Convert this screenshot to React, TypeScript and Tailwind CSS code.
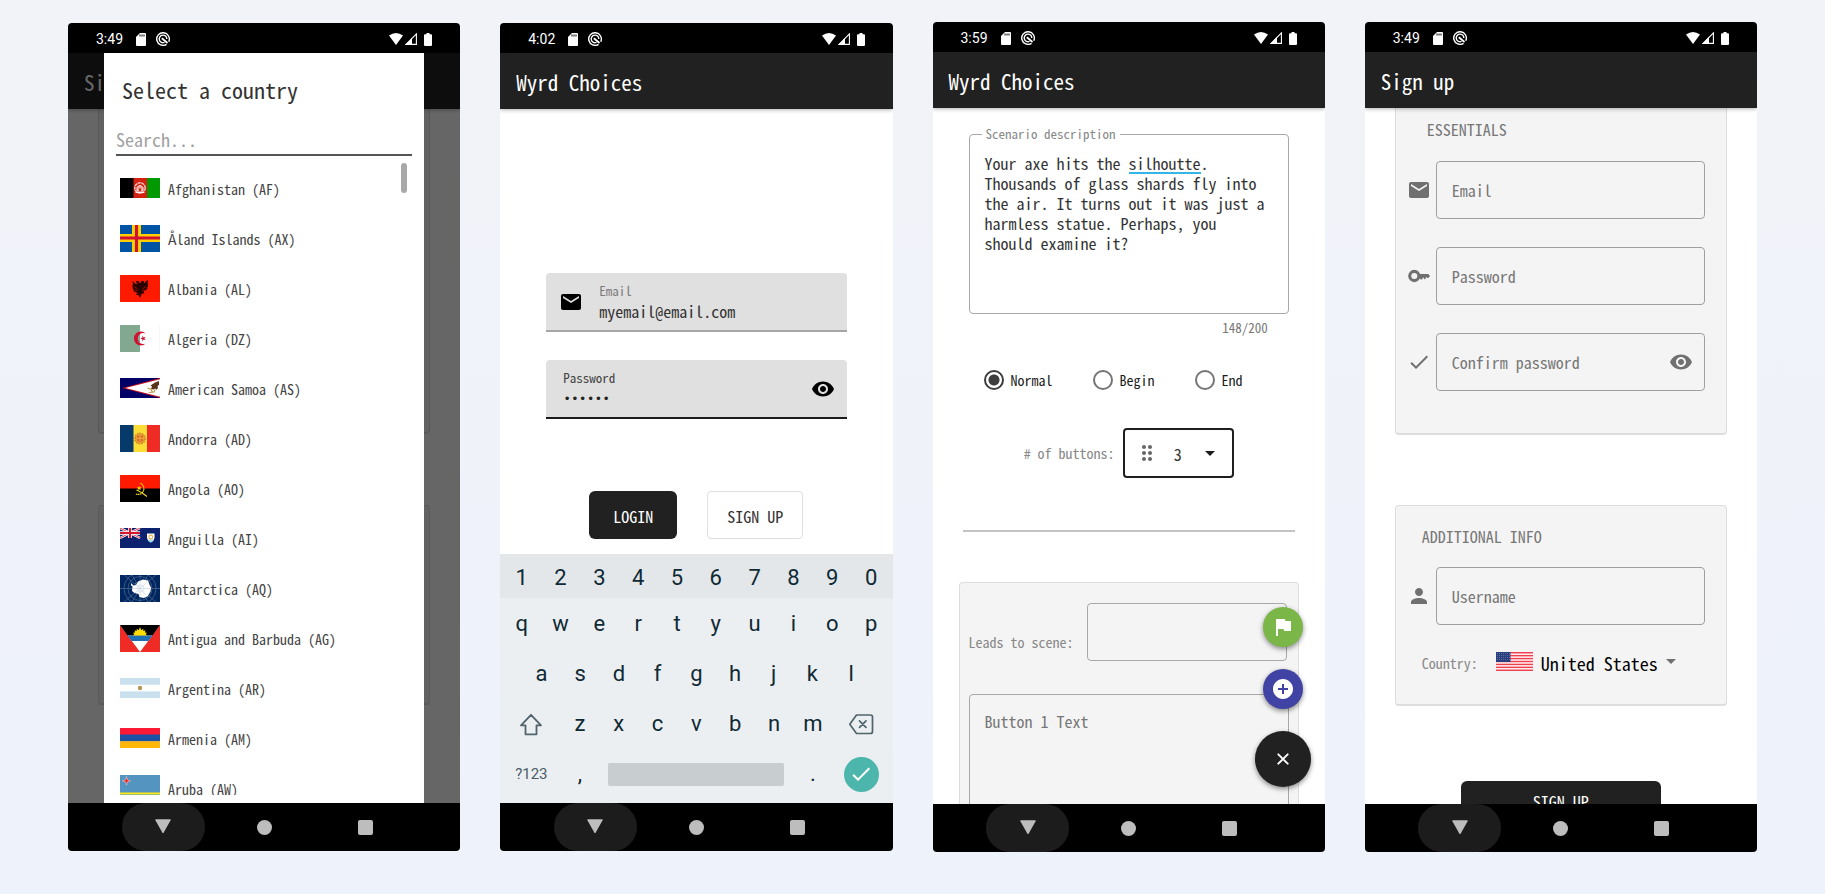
import React from "react";
import { MdEmail, MdVisibility, MdCheck, MdPerson, MdFlag, MdAddCircle, MdDragIndicator, MdArrowDropDown } from "react-icons/md";

type Flag = { h: 20 | 27; art: React.ReactNode };

const stripesV = (a: string, b: string, c: string, h: number) => (
  <>
    <rect width="14" height={h} fill={a} />
    <rect x="13.5" width="13.5" height={h} fill={b} />
    <rect x="27" width="13" height={h} fill={c} />
  </>
);

const flags: Record<string, Flag> = {
  AF: {
    h: 20,
    art: (
      <>
        {stripesV("#000", "#d32011", "#009a00", 20)}
        <circle cx="20" cy="10" r="5.2" fill="none" stroke="#f3c9c4" strokeWidth="1.4" strokeDasharray="3 .6" />
        <path d="M17 13V9.500q3-4 6 0V13zM15.500 14.500h9" fill="#ee9a92" stroke="#fff" strokeWidth=".9" />
        <path d="M19 13v-2.500h2V13" fill="#d32011" />
      </>
    ),
  },
  AX: {
    h: 27,
    art: (
      <>
        <rect width="40" height="27" fill="#0053a5" />
        <path d="M12 0h9v27h-9zM0 9h40v8H0z" fill="#ffce00" />
        <path d="M15 0h3v27h-3zM0 11.500h40v3H0z" fill="#d21034" />
      </>
    ),
  },
  AL: {
    h: 27,
    art: (
      <>
        <rect width="40" height="27" fill="#ff1a00" />
        <path
          d="M20 8.500 18.500 6h-3l1.500 2-.8 1.500-3.700-3.500.5 4-1 .5 1 1.500-.8 1 1.300 1-.6 1.500 1.600.2-.3 1.800 2-.7.8 1.500-1 1.500 2 .2 1 1L20 23l1.500-3.500 1-1 2-.2-1-1.500.8-1.500 2 .7-.3-1.800 1.600-.2-.6-1.500 1.300-1-.8-1 1-1.500-1-.5.5-4-3.700 3.500-.8-1.500L24.500 6h-3z"
          fill="#2a0300"
        />
        <path d="M14.500 11.500l3 2.500M25.500 11.500l-3 2.500M15 15l2.500.5M25 15l-2.500.5M18.500 18.500v1M21.500 18.500v1" stroke="#d01500" strokeWidth=".7" />
      </>
    ),
  },
  DZ: {
    h: 27,
    art: (
      <>
        <rect width="40" height="27" fill="#fff" />
        <rect width="20" height="27" fill="#82a98f" />
        <rect x="39.5" width=".5" height="27" fill="#eee" />
        <path d="M25.700 8.400a7 7 0 1 0 0 10.200 5.600 5.600 0 1 1 0-10.200z" fill="#d21034" />
        <path d="m20.300 13.500 2-.7v-2.200l1.300 1.800 2.100-.7-1.300 1.800 1.300 1.800-2.100-.7-1.300 1.800v-2.200z" fill="#d21034" />
      </>
    ),
  },
  AS: {
    h: 20,
    art: (
      <>
        <rect width="40" height="20" fill="#000066" />
        <path d="M40 0v20L2 10z" fill="#bd1021" />
        <path d="M40 1.200v17.600L5.500 10z" fill="#fff" />
        <path d="M39 3l-4 1.500-4.500 3 1.500 1-1 2.500 2 .5 2.500-1 .5 1.500 2-2-.5-2 1.500-1z" fill="#5a3219" />
        <path d="M27.500 10l4 1.500M29 14.500l5-.5 1-2.500M31 12l2 2.500" stroke="#b99646" strokeWidth="1.2" fill="none" />
      </>
    ),
  },
  AD: {
    h: 27,
    art: (
      <>
        {stripesV("#063a6b", "#fedd36", "#ee2b24", 27)}
        <circle cx="20" cy="13.5" r="5.2" fill="#e9a234" stroke="#d08a26" strokeWidth="1.6" strokeDasharray="1.6 1" />
        <path d="M17 10.500h6v5q-3 3-6 0z" fill="#dd6a2b" />
        <path d="M20 10.500v6M17 13.300h6" stroke="#f5c04a" strokeWidth=".8" />
      </>
    ),
  },
  AO: {
    h: 27,
    art: (
      <>
        <rect width="40" height="27" fill="#000" />
        <rect width="40" height="13.5" fill="#ff1a00" />
        <path d="M20.500 8.300a5.800 5.800 0 1 1-5 10.600" fill="none" stroke="#f5dd1e" strokeWidth="1.2" strokeDasharray="1.6 .4" />
        <path d="M16.500 15q4 1.500 10.500 6.500" fill="none" stroke="#f5dd1e" strokeWidth="1.1" />
        <path d="m19 11 .8 1.300 1.500.1-1 1.100.4 1.500-1.700-.7-1.300.7.3-1.500-1-1 1.500-.2z" fill="#f5dd1e" />
      </>
    ),
  },
  AI: {
    h: 20,
    art: (
      <>
        <rect width="40" height="20" fill="#0c226e" />
        <path d="M0 0l20 10M20 0 0 10" stroke="#fff" strokeWidth="2.4" />
        <path d="M0 0l20 10M20 0 0 10" stroke="#e23b4e" strokeWidth="1" />
        <path d="M10 0v10M0 5h20" stroke="#fff" strokeWidth="3.6" />
        <path d="M10 0v10M0 5h20" stroke="#d8172f" strokeWidth="2" />
        <path d="M27 5.500h7.500V10q-.5 3-3.700 4.500Q27.500 13 27 10z" fill="#fff" />
        <path d="M27.500 11.500h6.500q-1 2-3.200 3-2.300-1-3.300-3z" fill="#9fd9e4" />
        <circle cx="30.8" cy="9" r="1.9" fill="none" stroke="#f0b04a" strokeWidth="1.1" />
      </>
    ),
  },
  AQ: {
    h: 27,
    art: (
      <>
        <rect width="40" height="27" fill="#00265f" />
        <g fill="none" stroke="#5d779d" strokeWidth=".6">
          <path d="M20 0v27M0 13.500h40M4 0l32 27M36 0 4 27M12 0l16 27M28 0 12 27" />
          <circle cx="20" cy="13.5" r="12" />
          <circle cx="20" cy="13.5" r="16" />
        </g>
        <path d="m11 8 2.500 2.500 2.500-.5 2-3.500 5-2 5 1 1.500 4 1.500 3-.5 4-3 5-4 1.500-4-1-1-3-4-1-2.500-2 .5-4.500-1.500-1z" fill="#fff" />
        <path d="M20 6v15M13 13.500h17M15 8l11 12M27 7 15 18" stroke="#b9c6d8" strokeWidth=".5" />
        <circle cx="20.5" cy="13.5" r="3.5" fill="none" stroke="#b9c6d8" strokeWidth=".5" />
      </>
    ),
  },
  AG: {
    h: 27,
    art: (
      <>
        <rect width="40" height="27" fill="#ee2b24" />
        <path d="M0 0h40L20 27z" fill="#fff" />
        <path d="M0 0h40L32.500 10.500h-25z" fill="#000" />
        <path d="M7.500 10.500h25L28.400 16H11.600z" fill="#1f6fb5" />
        <path
          d="m12.500 10.500 1.800-1-1.300-1.800 2.100-.2-.6-2.300 2.100.9.2-2.400 1.900 1.500L20 2l1.300 3.200 1.900-1.500.2 2.400 2.100-.9-.6 2.300 2.100.2-1.300 1.800 1.800 1z"
          fill="#ffdd00"
        />
      </>
    ),
  },
  AR: {
    h: 20,
    art: (
      <>
        <rect width="40" height="20" fill="#c9e0ee" />
        <rect y="6.7" width="40" height="6.7" fill="#fff" />
        <circle cx="20" cy="10" r="2.2" fill="#b39659" />
      </>
    ),
  },
  AM: {
    h: 20,
    art: (
      <>
        <rect width="40" height="7" fill="#fe1937" />
        <rect y="6.5" width="40" height="7" fill="#1c51a3" />
        <rect y="13.3" width="40" height="6.7" fill="#ffb70a" />
      </>
    ),
  },
  AW: {
    h: 27,
    art: (
      <>
        <rect width="40" height="27" fill="#5494c0" />
        <path d="M0 17.500h40v2H0zM0 21.500h40v2H0z" fill="#f9e814" />
        <path d="m6.500 1.500 1 3.200 3 1.100-3 1.100-1 3.200-1-3.200-3-1.100 3-1.100z" fill="#ee2b24" stroke="#fff" strokeWidth=".4" />
      </>
    ),
  },
};

const countries: [string, string][] = [
  ["Afghanistan", "AF"],
  ["Åland Islands", "AX"],
  ["Albania", "AL"],
  ["Algeria", "DZ"],
  ["American Samoa", "AS"],
  ["Andorra", "AD"],
  ["Angola", "AO"],
  ["Anguilla", "AI"],
  ["Antarctica", "AQ"],
  ["Antigua and Barbuda", "AG"],
  ["Argentina", "AR"],
  ["Armenia", "AM"],
  ["Aruba", "AW"],
];

function FlagIcon({ code }: { code: string }) {
  const { h, art } = flags[code];
  return (
    <svg width="40" height={h} viewBox={`0 0 40 ${h}`} className="shrink-0" aria-hidden="true">
      {art}
    </svg>
  );
}

function UsFlag() {
  return (
    <svg width="37" height="19" viewBox="0 0 37 19" className="shrink-0" aria-hidden="true">
      <rect width="37" height="19" fill="#fff" />
      {[0, 1, 2, 3, 4, 5, 6].map((i) => (
        <rect key={i} y={i * 2.92} width="37" height="1.5" fill="#f0404d" />
      ))}
      <rect width="14.5" height="10" fill="#2b3f7e" />
      <path d="M1 1.500h13M1 3.500h13M1 5.500h13M1 7.500h13" stroke="#7f8cb5" strokeWidth=".7" strokeDasharray=".8 1.2" />
    </svg>
  );
}

function KeyIcon() {
  return (
    <svg width="24" height="24" viewBox="0 0 24 24" className="shrink-0" aria-hidden="true">
      <circle cx="7.3" cy="12" r="4.6" fill="none" stroke="currentColor" strokeWidth="3.1" />
      <path d="M12 9.900h9.300L23 11.900l-1.800 2.200h-1l-1-1-1 2.200h-.8l-1.300-2-1 2.200h-1.300l-1.300-1.700H12z" fill="currentColor" />
    </svg>
  );
}

function StatusBar({ time }: { time: string }) {
  return (
    <div className="flex h-[30px] shrink-0 items-center bg-black px-7 pt-0.5 font-['Roboto',sans-serif] text-white">
      <span className="text-sm">{time}</span>
      <svg className="ml-[13px]" width="10" height="13" viewBox="0 0 10 13" aria-hidden="true">
        <path d="M4 0h5q1 0 1 1v11q0 1-1 1H1q-1 0-1-1V4z" fill="#fff" />
        <path d="M4 1.500v2M6 1.500v2M8 1.500v2" stroke="#000" strokeWidth="1" />
      </svg>
      <svg className="ml-2.5" width="14" height="14" viewBox="0 0 14 14" fill="none" stroke="#fff" aria-hidden="true">
        <path d="M10.500 12.300A6.300 6.300 0 1 1 12.700 9.800" strokeWidth="1.4" />
        <path d="M8.500 10.400A3.800 3.800 0 1 1 10.800 7" strokeWidth="1.4" />
        <path d="M5.800 6.200 11.500 11" strokeWidth="1.8" />
      </svg>
      <svg className="ml-auto" width="14" height="12" viewBox="0 0 14 12" aria-hidden="true">
        <path d="M0 2.500Q7-2.500 14 2.500L7 12z" fill="#fff" />
      </svg>
      <svg className="ml-0.5" width="12" height="12" viewBox="0 0 12 12" aria-hidden="true">
        <path d="M11.400.9v10.500H1.200z" fill="none" stroke="#fff" strokeWidth="1.1" />
        <path d="M7 5v7H0z" fill="#fff" />
      </svg>
      <svg className="ml-[7px]" width="8" height="13" viewBox="0 0 8 13" aria-hidden="true">
        <path d="M2.500 0h3v1.200H7q1 0 1 1V12q0 1-1 1H1q-1 0-1-1V2.200q0-1 1-1h1.500z" fill="#fff" />
      </svg>
    </div>
  );
}

function AppBar({ title }: { title: string }) {
  return (
    <header className="relative z-10 flex h-14 shrink-0 items-center bg-[#212121] px-4 pt-0.5 shadow-[0_1px_4px_rgba(0,0,0,0.3)]">
      <h2 className="text-[21px] leading-7 text-white">{title}</h2>
    </header>
  );
}

function NavBar() {
  return (
    <nav aria-label="System navigation" className="relative z-20 flex h-12 shrink-0 items-center justify-center bg-black text-[#bdbdbd]">
      <div className="flex h-full w-[101px] justify-center">
        <button type="button" aria-label="Back" className="flex h-full w-[83px] items-center justify-center rounded-full bg-[#1c1c1c]">
          <svg width="16" height="16" viewBox="0 0 16 16" fill="currentColor" aria-hidden="true">
            <path d="M1 .3h14q1 0 .6.900L8.600 13.800q-.6.900-1.200 0L.4 1.200Q0 .3 1 .3z" />
          </svg>
        </button>
      </div>
      <div className="flex w-[101px] justify-center">
        <button type="button" aria-label="Home" className="size-[15px] rounded-full bg-current" />
      </div>
      <div className="flex w-[101px] justify-center">
        <button type="button" aria-label="Recent apps" className="size-[15px] rounded-xs bg-current" />
      </div>
    </nav>
  );
}

function Phone({ time, title, tall, children, overlay }: { time: string; title: string; tall?: boolean; children: React.ReactNode; overlay?: React.ReactNode }) {
  return (
    <section aria-label={title} className={`flex flex-col overflow-hidden rounded-sm bg-white ${tall ? "h-[830px]" : "h-[828px]"}`}>
      <StatusBar time={time} />
      <div className="relative flex min-h-0 flex-1 flex-col overflow-hidden">
        <AppBar title={title} />
        <div className="relative flex min-h-0 flex-1 flex-col overflow-hidden">{children}</div>
        {overlay}
      </div>
      <NavBar />
    </section>
  );
}

const cardClass = "rounded-sm border border-[#dddddd] border-b-2 bg-[#f4f4f4]";

function CountryDialog() {
  return (
    <div className="absolute inset-0 z-10 flex bg-black/60 px-9">
      <div role="dialog" aria-label="Select a country" className="flex min-h-0 w-full flex-col bg-white px-3 pb-2">
        <h2 className="px-1.5 pt-[22px] text-[22px] leading-7 text-[#333333]">Select a country</h2>
        <input
          type="text"
          aria-label="Search countries"
          placeholder="Search..."
          className="mt-5 h-[33px] w-full shrink-0 border-b-2 border-[#555555] bg-transparent text-lg outline-none placeholder:text-[#a0a0a0]"
        />
        <div className="relative mt-[7px] min-h-0 flex-1 overflow-hidden">
          <ul>
            {countries.map(([name, code]) => (
              <li key={code} className="flex h-[50px] items-center gap-2 pl-1 text-sm text-[#444444]">
                <FlagIcon code={code} />
                <span className="pt-0.5">
                  {name} ({code})
                </span>
              </li>
            ))}
          </ul>
          <div className="absolute top-0 right-[5px] h-[30px] w-1.5 rounded-full bg-[#a8a8a8]" />
        </div>
      </div>
    </div>
  );
}

function PickerPhone() {
  return (
    <Phone time="3:49" title="Sign up" overlay={<CountryDialog />}>
      <div className="flex flex-col items-stretch px-[30px]">
        <div className={`h-[325px] rounded-t-none border-t-0 ${cardClass}`} />
        <div className={`mt-[71px] h-[200px] ${cardClass}`} />
      </div>
    </Phone>
  );
}

const keyClass = "flex h-full flex-1 items-center justify-center";

function Keys({ row }: { row: string }) {
  return (
    <>
      {row.split("").map((k) => (
        <button key={k} type="button" className={keyClass}>
          {k}
        </button>
      ))}
    </>
  );
}

function Keyboard() {
  return (
    <div className="mt-auto bg-[#eceff1] pb-1 font-['Roboto',sans-serif] text-[22px] leading-7 text-[#0f2a35]">
      <div className="flex h-11 items-center bg-[#e3e7ea] px-0.5 pt-[3px]">
        <Keys row="1234567890" />
      </div>
      <div className="flex h-[51px] items-center px-0.5">
        <Keys row="qwertyuiop" />
      </div>
      <div className="flex h-[50px] items-center px-[22px]">
        <Keys row="asdfghjkl" />
      </div>
      <div className="flex h-[50px] items-center px-0.5">
        <button type="button" aria-label="Shift" className="flex h-full flex-[1.5] items-center justify-center text-[#51646e]">
          <svg width="24" height="24" viewBox="0 0 24 24" fill="none" stroke="currentColor" strokeWidth="1.8" strokeLinejoin="round" aria-hidden="true">
            <path d="M12 2.800 2 13.300h4.500v9h11v-9H22z" />
          </svg>
        </button>
        <div className="flex h-full flex-[7]">
          <Keys row="zxcvbnm" />
        </div>
        <button type="button" aria-label="Backspace" className="flex h-full flex-[1.5] items-center justify-center text-[#51646e]">
          <svg width="26" height="22" viewBox="0 0 26 22" fill="none" stroke="currentColor" strokeWidth="1.7" strokeLinejoin="round" strokeLinecap="round" aria-hidden="true">
            <path d="M8.500 2h14q2 0 2 2v14.500q0 2-2 2h-14L1.800 11.300z" />
            <path d="m11.500 7.800 6.500 6.500m0-6.500-6.500 6.500" />
          </svg>
        </button>
      </div>
      <div className="flex h-[50px] items-center px-0.5">
        <button type="button" className="flex h-full flex-[1.5] items-center justify-center text-[15px] text-[#4a5d67]">
          ?123
        </button>
        <button type="button" className={keyClass}>
          ,
        </button>
        <div className="flex-[5]">
          <div className="flex px-[9px]">
            <button type="button" aria-label="Space" className="h-[23px] w-full rounded-xs bg-[#c8cdd0]" />
          </div>
        </div>
        <button type="button" className={keyClass}>
          .
        </button>
        <div className="flex flex-[1.5] justify-center">
          <button type="button" aria-label="Done" className="flex size-[35px] items-center justify-center rounded-full bg-[#4db6ac] text-white">
            <MdCheck size={24} />
          </button>
        </div>
      </div>
    </div>
  );
}

function LoginPhone() {
  return (
    <Phone time="4:02" title="Wyrd Choices">
      <div className="px-[46px] pt-[164px]">
        <div className="flex h-[59px] items-center rounded-t-sm border-b-2 border-[#a6a6a6] bg-[#e0e0e0] pl-[13px]">
          <MdEmail size={24} className="shrink-0 text-black" aria-hidden="true" />
          <div className="ml-4 flex min-w-0 flex-1 flex-col pt-0.5">
            <label htmlFor="login-email" className="text-[13px] leading-4 text-[#7b7b7b]">
              Email
            </label>
            <input id="login-email" type="email" defaultValue="myemail@email.com" className="h-6 w-full bg-transparent text-base text-[#333333] outline-none" />
          </div>
        </div>
        <div className="mt-7 flex h-[59px] items-center rounded-t-sm border-b-2 border-[#1c1c1c] bg-[#e0e0e0] pr-3 pl-[17px]">
          <div className="flex min-w-0 flex-1 flex-col pt-0.5">
            <label htmlFor="login-password" className="text-[13px] leading-4 text-[#444444]">
              Password
            </label>
            <input
              id="login-password"
              type="password"
              defaultValue="secret"
              className="h-6 w-full bg-transparent pt-1 font-['Liberation_Mono',monospace] text-[13px] text-[#222222] outline-none"
            />
          </div>
          <button type="button" aria-label="Show password" className="text-black">
            <MdVisibility size={24} />
          </button>
        </div>
        <div className="mt-[72px] flex justify-center gap-[30px]">
          <button type="button" className="h-12 w-[88px] rounded-md bg-[#212121] pt-0.5 text-base text-white">
            LOGIN
          </button>
          <button type="button" className="h-12 w-24 rounded-sm border border-[#dfdfdf] pt-0.5 text-base text-[#333333]">
            SIGN UP
          </button>
        </div>
      </div>
      <Keyboard />
    </Phone>
  );
}

function Radio({ label, checked }: { label: string; checked?: boolean }) {
  return (
    <label className="flex items-center gap-[7px] text-sm text-[#1c1c1c]">
      <input
        type="radio"
        name="scene-type"
        defaultChecked={checked}
        className="size-5 appearance-none rounded-full border-2 border-[#757575] checked:border-[#3d3d3d] checked:bg-[radial-gradient(circle,#3d3d3d_5px,transparent_6px)]"
      />
      {label}
    </label>
  );
}

function ScenarioPhone() {
  return (
    <Phone tall time="3:59" title="Wyrd Choices">
      <div className="px-9 pt-[18px]">
        <fieldset className="relative h-[188px] min-w-0 rounded-sm border border-[#a8a8a8] px-3">
          <legend className="px-1 text-[13px] leading-4 text-[#888888]">Scenario description</legend>
          <textarea
            aria-label="Scenario description"
            spellCheck={false}
            defaultValue="Your axe hits the silhoutte. Thousands of glass shards fly into the air. It turns out it was just a harmless statue. Perhaps, you should examine it?"
            className="mt-[11px] block h-[140px] w-[286px] resize-none overflow-hidden bg-transparent px-[3px] text-base leading-5 text-[#333333] outline-none"
          />
          <span className="absolute top-[30px] left-[159px] h-0.5 w-[72px] bg-[#33b5e5]" />
        </fieldset>
        <p className="mt-1 pr-[21px] text-right text-[13px] leading-5 text-[#777777]">148/200</p>
      </div>
      <div className="mt-8 flex h-[42px] items-center gap-10 pl-[51px]">
        <Radio label="Normal" checked />
        <Radio label="Begin" />
        <Radio label="End" />
      </div>
      <div className="mt-[38px] flex items-center justify-center gap-2">
        <label htmlFor="button-count" className="text-sm text-[#888888]">
          # of buttons:
        </label>
        <div className="relative flex h-[50px] w-[111px] items-center">
          <select id="button-count" defaultValue="3" className="h-full w-full appearance-none rounded-sm border-2 border-[#1f1f1f] bg-white pt-0.5 pl-[49px] text-base text-[#333333] outline-none">
            <option>3</option>
          </select>
          <MdDragIndicator size={24} className="pointer-events-none absolute left-3 text-[#666666]" aria-hidden="true" />
          <MdArrowDropDown size={24} className="pointer-events-none absolute right-3 text-[#1c1c1c]" aria-hidden="true" />
        </div>
      </div>
      <hr className="mx-[30px] mt-[52px] border-t-2 border-[#c4c4c4]" />
      <div className={`mx-[26px] mt-[50px] h-[300px] shrink-0 px-[9px] pt-5 ${cardClass}`}>
        <div className="flex items-center justify-between pr-0.5">
          <label htmlFor="leads-to" className="pt-5 text-sm text-[#888888]">
            Leads to scene:
          </label>
          <input id="leads-to" type="text" className="h-[58px] w-[200px] rounded-sm border border-[#a8a8a8] bg-transparent px-4 outline-none" />
        </div>
        <textarea
          aria-label="Button 1 Text"
          placeholder="Button 1 Text"
          className="mt-[33px] block h-40 w-full resize-none overflow-hidden rounded-sm border border-[#a8a8a8] bg-transparent px-[15px] pt-3.5 text-base outline-none placeholder:text-[#777777]"
        />
      </div>
      <div className="absolute right-3.5 bottom-[17px] flex flex-col items-center gap-[22px]">
        <button type="button" aria-label="Flag scene" className="flex size-10 items-center justify-center rounded-full bg-[#7ab648] text-white shadow-[0_2px_5px_rgba(0,0,0,0.45)]">
          <MdFlag size={24} />
        </button>
        <button type="button" aria-label="Add scene" className="flex size-10 items-center justify-center rounded-full bg-[#4043a3] text-white shadow-[0_2px_5px_rgba(0,0,0,0.45)]">
          <MdAddCircle size={24} />
        </button>
        <button type="button" aria-label="Close actions" className="flex size-14 items-center justify-center rounded-full bg-[#212121] text-white shadow-[0_2px_5px_rgba(0,0,0,0.45)]">
          <svg width="12" height="12" viewBox="0 0 12 12" stroke="currentColor" strokeWidth="1.9" strokeLinecap="round" aria-hidden="true">
            <path d="M1.300 1.300l9.400 9.400M10.700 1.300l-9.400 9.400" />
          </svg>
        </button>
      </div>
    </Phone>
  );
}

function OutlinedField({ icon, label, type = "text", trailing }: { icon: React.ReactNode; label: string; type?: string; trailing?: React.ReactNode }) {
  return (
    <div className="flex items-center gap-[5px] text-[#707070]">
      {icon}
      <div className="relative flex min-w-0 flex-1 items-center">
        <input
          type={type}
          aria-label={label}
          placeholder={label}
          className="h-[58px] w-full rounded-sm border border-[#a0a0a0] bg-transparent px-[15px] text-base outline-none placeholder:text-[#777777]"
        />
        {trailing}
      </div>
    </div>
  );
}

function SignUpPhone() {
  return (
    <Phone tall time="3:49" title="Sign up">
      <div className="flex flex-col px-[30px]">
        <div className={`rounded-t-none border-t-0 pt-[9px] pr-[21px] pb-[42px] pl-[11px] ${cardClass}`}>
          <h3 className="pl-5 text-base font-medium text-[#777777]">ESSENTIALS</h3>
          <div className="mt-5 flex flex-col gap-7">
            <OutlinedField icon={<MdEmail size={24} className="shrink-0" aria-hidden="true" />} label="Email" type="email" />
            <OutlinedField icon={<KeyIcon />} label="Password" type="password" />
            <OutlinedField
              icon={<MdCheck size={24} className="shrink-0" aria-hidden="true" />}
              label="Confirm password"
              type="password"
              trailing={
                <button type="button" aria-label="Show password" className="absolute right-3">
                  <MdVisibility size={24} />
                </button>
              }
            />
          </div>
        </div>
        <div className={`mt-[70px] pt-[18px] pr-[21px] pb-[23px] pl-[11px] ${cardClass}`}>
          <h3 className="pl-[15px] text-base font-medium text-[#777777]">ADDITIONAL INFO</h3>
          <div className="mt-[19px]">
            <OutlinedField icon={<MdPerson size={24} className="shrink-0" aria-hidden="true" />} label="Username" />
          </div>
          <div className="mt-5 flex h-9 items-center pl-[15px]">
            <label htmlFor="country" className="text-sm text-[#888888]">
              Country:
            </label>
            <span className="mb-1 ml-[18px]">
              <UsFlag />
            </span>
            <div className="relative ml-2 flex items-center">
              <select id="country" defaultValue="United States" className="appearance-none bg-transparent pr-6 text-lg text-black outline-none">
                <option>United States</option>
              </select>
              <svg width="10" height="9" viewBox="0 0 10 9" className="pointer-events-none absolute right-1.5" aria-hidden="true">
                <path d="M0 0h10L5 5z" fill="#707070" />
              </svg>
            </div>
          </div>
        </div>
        <button type="button" className="mx-auto mt-[75px] h-10 w-[200px] rounded-md bg-[#212121] text-base text-white">
          SIGN UP
        </button>
      </div>
    </Phone>
  );
}

export default function App() {
  return (
    <main className="min-h-screen bg-linear-to-b from-[#f1f3f8] to-[#eef2fb] px-[68px] pt-[22px] pb-[42px] font-['Noto_Sans_Mono_CJK_JP','Liberation_Mono',monospace]">
      <div className="grid grid-cols-4 items-center gap-10">
        <PickerPhone />
        <LoginPhone />
        <ScenarioPhone />
        <SignUpPhone />
      </div>
    </main>
  );
}
